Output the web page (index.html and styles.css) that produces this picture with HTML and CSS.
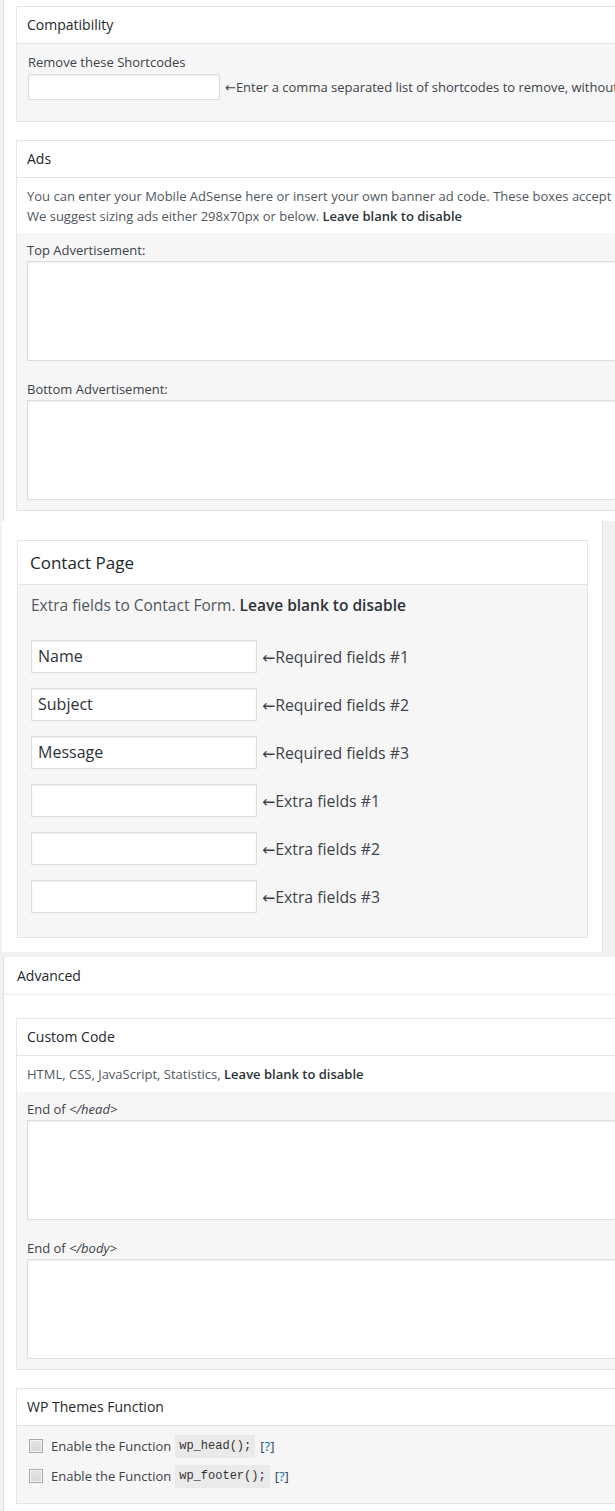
FILE: index.html
```html
<!DOCTYPE html>
<html>
<head>
<meta charset="utf-8">
<link rel="stylesheet" href="styles.css">
</head>
<body>
<div class="panel p1">
  <div class="box compat">
    <div class="box-h">Compatibility</div>
    <div class="box-b">
      <div class="lbl">Remove these Shortcodes</div>
      <div class="row">
        <span class="txt"></span>
        <span class="hint">←Enter a comma separated list of shortcodes to remove, without the brackets.</span>
      </div>
    </div>
  </div>
  <div class="box ads">
    <div class="box-h">Ads</div>
    <div class="desc two">You can enter your Mobile AdSense here or insert your own banner ad code. These boxes accept both HTML and JavaScript.<br>We suggest sizing ads either 298x70px or below. <b>Leave blank to disable</b></div>
    <div class="box-b area">
      <div class="lbl">Top Advertisement:</div>
      <span class="ta"></span>
      <div class="lbl second">Bottom Advertisement:</div>
      <span class="ta"></span>
    </div>
  </div>
</div>

<div class="panel p2">
  <div class="cbox">
    <div class="cbox-h">Contact Page</div>
    <div class="cbox-b">
      <div class="cdesc">Extra fields to Contact Form. <b>Leave blank to disable</b></div>
      <div class="crows">
        <div class="crow"><span class="cin">Name</span><span class="clbl">←Required fields #1</span></div>
        <div class="crow"><span class="cin">Subject</span><span class="clbl">←Required fields #2</span></div>
        <div class="crow"><span class="cin">Message</span><span class="clbl">←Required fields #3</span></div>
        <div class="crow"><span class="cin"></span><span class="clbl">←Extra fields #1</span></div>
        <div class="crow"><span class="cin"></span><span class="clbl">←Extra fields #2</span></div>
        <div class="crow"><span class="cin"></span><span class="clbl">←Extra fields #3</span></div>
      </div>
    </div>
  </div>
</div>

<div class="panel p3">
  <div class="sec-h">Advanced</div>
  <div class="sec-b">
    <div class="box code">
      <div class="box-h">Custom Code</div>
      <div class="desc one">HTML, CSS, JavaScript, Statistics, <b>Leave blank to disable</b></div>
      <div class="box-b area">
        <div class="lbl">End of <i>&lt;/head&gt;</i></div>
        <span class="ta"></span>
        <div class="lbl second">End of <i>&lt;/body&gt;</i></div>
        <span class="ta"></span>
      </div>
    </div>
    <div class="box wp">
      <div class="box-h">WP Themes Function</div>
      <div class="box-b checks">
        <div class="chk"><span class="cb"></span><span>Enable the Function</span><code>wp_head();</code><span class="help">[<span class="q">?</span>]</span></div>
        <div class="chk"><span class="cb"></span><span>Enable the Function</span><code>wp_footer();</code><span class="help">[<span class="q">?</span>]</span></div>
      </div>
    </div>
  </div>
</div>
</body>
</html>
```

FILE: styles.css
```css
html, body {
  margin: 0;
  padding: 0;
  overflow: hidden;
}
body {
  background: #f1f1f1;
  font-family: "Open Sans", "Noto Sans", "DejaVu Sans", sans-serif;
  font-size: 13px;
  color: #3c434a;
  width: 615px;
  height: 1511px;
}
b { font-weight: 600; color: #2c3338; }

.panel { background: #fff; box-sizing: border-box; }

.p1 {
  margin-left: 3px;
  border-left: 1px solid #e2e2e2;
  width: 900px;
  height: 521px;
  padding: 6px 0 0 12px;
}

.box {
  width: 800px;
  border: 1px solid #e5e5e5;
  background: #fff;
}
.box-h {
  height: 36px;
  line-height: 36px;
  padding-left: 10px;
  font-size: 14px;
  color: #23282d;
  border-bottom: 1px solid #e5e5e5;
}
.box-b {
  background: #f6f6f6;
  padding: 8px 0 21px 11px;
}
.lbl {
  height: 20px;
  line-height: 20px;
  color: #3c434a;
}
.lbl i { font-style: italic; }
.row {
  margin-top: 2px;
  display: flex;
  align-items: center;
  white-space: nowrap;
}
.txt {
  display: block;
  width: 192px;
  height: 26px;
  box-sizing: border-box;
  background: #fff;
  border: 1px solid #ddd;
  box-shadow: inset 0 1px 2px rgba(0,0,0,.07);
}
.hint { margin-left: 5px; }

.ads { margin-top: 18px; }
.desc {
  background: #fff;
  padding: 8px 0 7px 10px;
  line-height: 20px;
  white-space: nowrap;
  color: #50575e;
}
.desc.one { padding: 8px 0 8px 10px; }
.area { padding: 7px 0 10px 10px; }
.area .lbl { margin-bottom: 1px; }
.ta {
  display: block;
  width: 760px;
  height: 100px;
  box-sizing: border-box;
  background: #fff;
  border: 1px solid #ddd;
  box-shadow: inset 0 1px 2px rgba(0,0,0,.07);
}
.lbl.second { margin-top: 18px; }

/* Contact section */
.p2 {
  margin-left: 2px;
  width: 601px;
  height: 431px;
  border-right: 1px solid #e2e2e2;
  padding: 19px 14px 0 15px;
}
.cbox {
  border: 1px solid #e5e5e5;
  background: #f6f6f6;
}
.cbox-h {
  background: #fff;
  height: 43px;
  line-height: 43px;
  padding-left: 12px;
  font-size: 17px;
  color: #23282d;
  border-bottom: 1px solid #e5e5e5;
}
.cbox-b { padding: 9px 0 24px 13px; }
.cdesc {
  font-size: 15.5px;
  line-height: 22px;
  color: #50575e;
}
.crows {
  margin-top: 24px;
  display: flex;
  flex-direction: column;
  gap: 15px;
}
.crow { display: flex; align-items: center; }
.cin {
  display: block;
  width: 226px;
  height: 33px;
  box-sizing: border-box;
  background: #fff;
  border: 1px solid #ddd;
  box-shadow: inset 0 1px 2px rgba(0,0,0,.07);
  padding-left: 6px;
  font-size: 16px;
  line-height: 31px;
  color: #2c3338;
}
.clbl { margin-left: 5px; font-size: 15.8px; color: #3c434a; }

/* Advanced */
.p3 {
  margin-top: 5px;
  margin-left: 3px;
  border-left: 1px solid #e2e2e2;
  width: 900px;
  height: 560px;
}
.sec-h {
  height: 37px;
  line-height: 37px;
  padding-left: 13px;
  font-size: 14px;
  color: #23282d;
  border-bottom: 1px solid #eee;
}
.sec-b { padding: 23px 0 0 12px; }
.wp { margin-top: 18px; }
.checks { padding: 5px 0 12px 12px; }
.chk {
  height: 30px;
  display: flex;
  align-items: center;
  white-space: nowrap;
}
.cb {
  display: block;
  width: 14px;
  height: 14px;
  box-sizing: border-box;
  border: 1px solid #a9a9a9;
  background: linear-gradient(#e4e4e4, #d6d6d6);
  box-shadow: inset 0 0 0 1px #f4f4f4;
  margin-right: 8px;
}
code {
  font-family: "Liberation Mono", "DejaVu Sans Mono", monospace;
  font-size: 12px;
  background: #eaeaea;
  padding: 4px;
  margin-left: 4px;
  color: #333;
  line-height: 15px;
}
.help { margin-left: 5px; color: #2c3e50; }
.help .q { color: #0073aa; }
```
